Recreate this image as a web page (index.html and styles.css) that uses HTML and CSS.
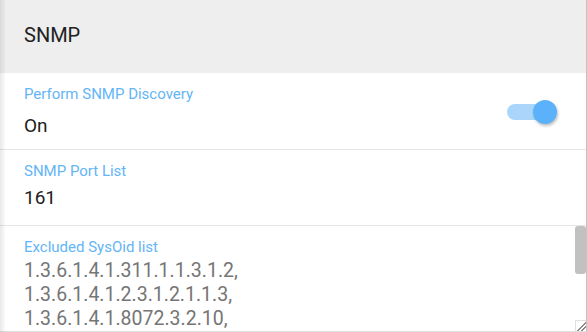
FILE: index.html
```html
<!DOCTYPE html>
<html lang="en">

<head>
  <meta charset="UTF-8">
  <meta name="viewport" content="width=device-width, initial-scale=1.0">
  <title>SNMP</title>
  <link rel="stylesheet" href="styles.css">
</head>

<body>
  <div class="panel">
    <div class="panel-header">SNMP</div>

    <div class="field field-switch">
      <div class="field-text">
        <div class="field-label">Perform SNMP Discovery</div>
        <div class="field-value field-value-wide">On</div>
      </div>
      <label class="switch">
        <input type="checkbox" checked>
        <span class="switch-track"></span>
        <span class="switch-thumb"></span>
      </label>
    </div>

    <div class="field">
      <div class="field-label">SNMP Port List</div>
      <div class="field-value">161</div>
    </div>

    <div class="field field-area">
      <label class="area-label" for="sysoid">Excluded SysOid list</label>
      <textarea id="sysoid" class="area-input">1.3.6.1.4.1.311.1.1.3.1.2,
1.3.6.1.4.1.2.3.1.2.1.1.3,
1.3.6.1.4.1.8072.3.2.10,
1.3.6.1.4.1.9.1.1208,
1.3.6.1.4.1.674.10892.2,
1.3.6.1.4.1.11.2.3.9.1,
1.3.6.1.4.1.2636.1.1.1.2,
1.3.6.1.4.1.6876.4.1</textarea>
      <span class="area-scroll"></span>
      <span class="area-grip"></span>
    </div>
  </div>
</body>

</html>
```

FILE: styles.css
```css
body {
  font-family: Roboto, "Noto Sans", sans-serif;
  margin: 0;
  padding: 0;
  background-color: #fff;
  overflow: hidden;
}

body::before {
  content: "";
  position: fixed;
  top: 0;
  left: 0;
  bottom: 0;
  width: 6px;
  background: linear-gradient(to right, rgba(0, 0, 0, 0.09), rgba(0, 0, 0, 0));
  pointer-events: none;
  z-index: 2;
}

.panel {
  height: 332px;
  border-right: 1px solid #c4c4c4;
  box-sizing: border-box;
}

.panel-header {
  height: 73px;
  box-sizing: border-box;
  padding: 23px 24px 0;
  background-color: #eeeeee;
  color: #212121;
  font-size: 20px;
  line-height: 24px;
}

.field {
  padding: 12px 24px 15px;
  border-bottom: 1px solid #e6e6e6;
}

.field-switch {
  display: flex;
  align-items: center;
  justify-content: space-between;
  padding: 12px 29px 11px 24px;
}

.field-label {
  color: #64b5f6;
  font-size: 15px;
  line-height: 18px;
}

.field-value {
  margin-top: 6px;
  color: #212121;
  font-size: 19px;
  line-height: 24px;
}

.field-value-wide {
  margin-top: 11px;
}

.switch {
  position: relative;
  width: 50px;
  height: 24px;
  cursor: pointer;
}

.switch input {
  display: none;
}

.switch-track {
  position: absolute;
  left: 0;
  top: 4px;
  width: 40px;
  height: 16px;
  border-radius: 8px;
  background-color: #aad6fb;
}

.switch-thumb {
  position: absolute;
  right: 0;
  top: 0;
  width: 24px;
  height: 24px;
  border-radius: 50%;
  background-color: #5bb2fb;
  box-shadow: 1px 2px 3px rgba(0, 0, 0, 0.25);
}

.field-area {
  position: relative;
  padding: 0;
  border-bottom: none;
}

.area-label {
  position: absolute;
  top: 12px;
  left: 24px;
  color: #64b5f6;
  font-size: 15px;
  line-height: 18px;
}

.area-input {
  display: block;
  width: 100%;
  height: 106px;
  box-sizing: border-box;
  margin: 0;
  padding: 33px 24px 5px;
  border: none;
  border-bottom: 1px solid #e0e0e0;
  outline: none;
  resize: none;
  overflow: hidden;
  font-family: Roboto, "Noto Sans", sans-serif;
  font-size: 19.5px;
  line-height: 24px;
  color: #757575;
  background: #fff;
}

.area-scroll {
  position: absolute;
  top: 0;
  right: 0;
  width: 11px;
  height: 48px;
  border-radius: 3px;
  background-color: #c1c1c1;
}

.area-grip {
  position: absolute;
  right: 0;
  bottom: 1px;
  width: 10px;
  height: 10px;
  border-top: 1px solid #e0e0e0;
  border-left: 1px solid #e0e0e0;
  background: linear-gradient(135deg, transparent 55%, #8a8a8a 55%, #8a8a8a 62%, transparent 62%, transparent 75%, #8a8a8a 75%, #8a8a8a 82%, transparent 82%);
}
```
